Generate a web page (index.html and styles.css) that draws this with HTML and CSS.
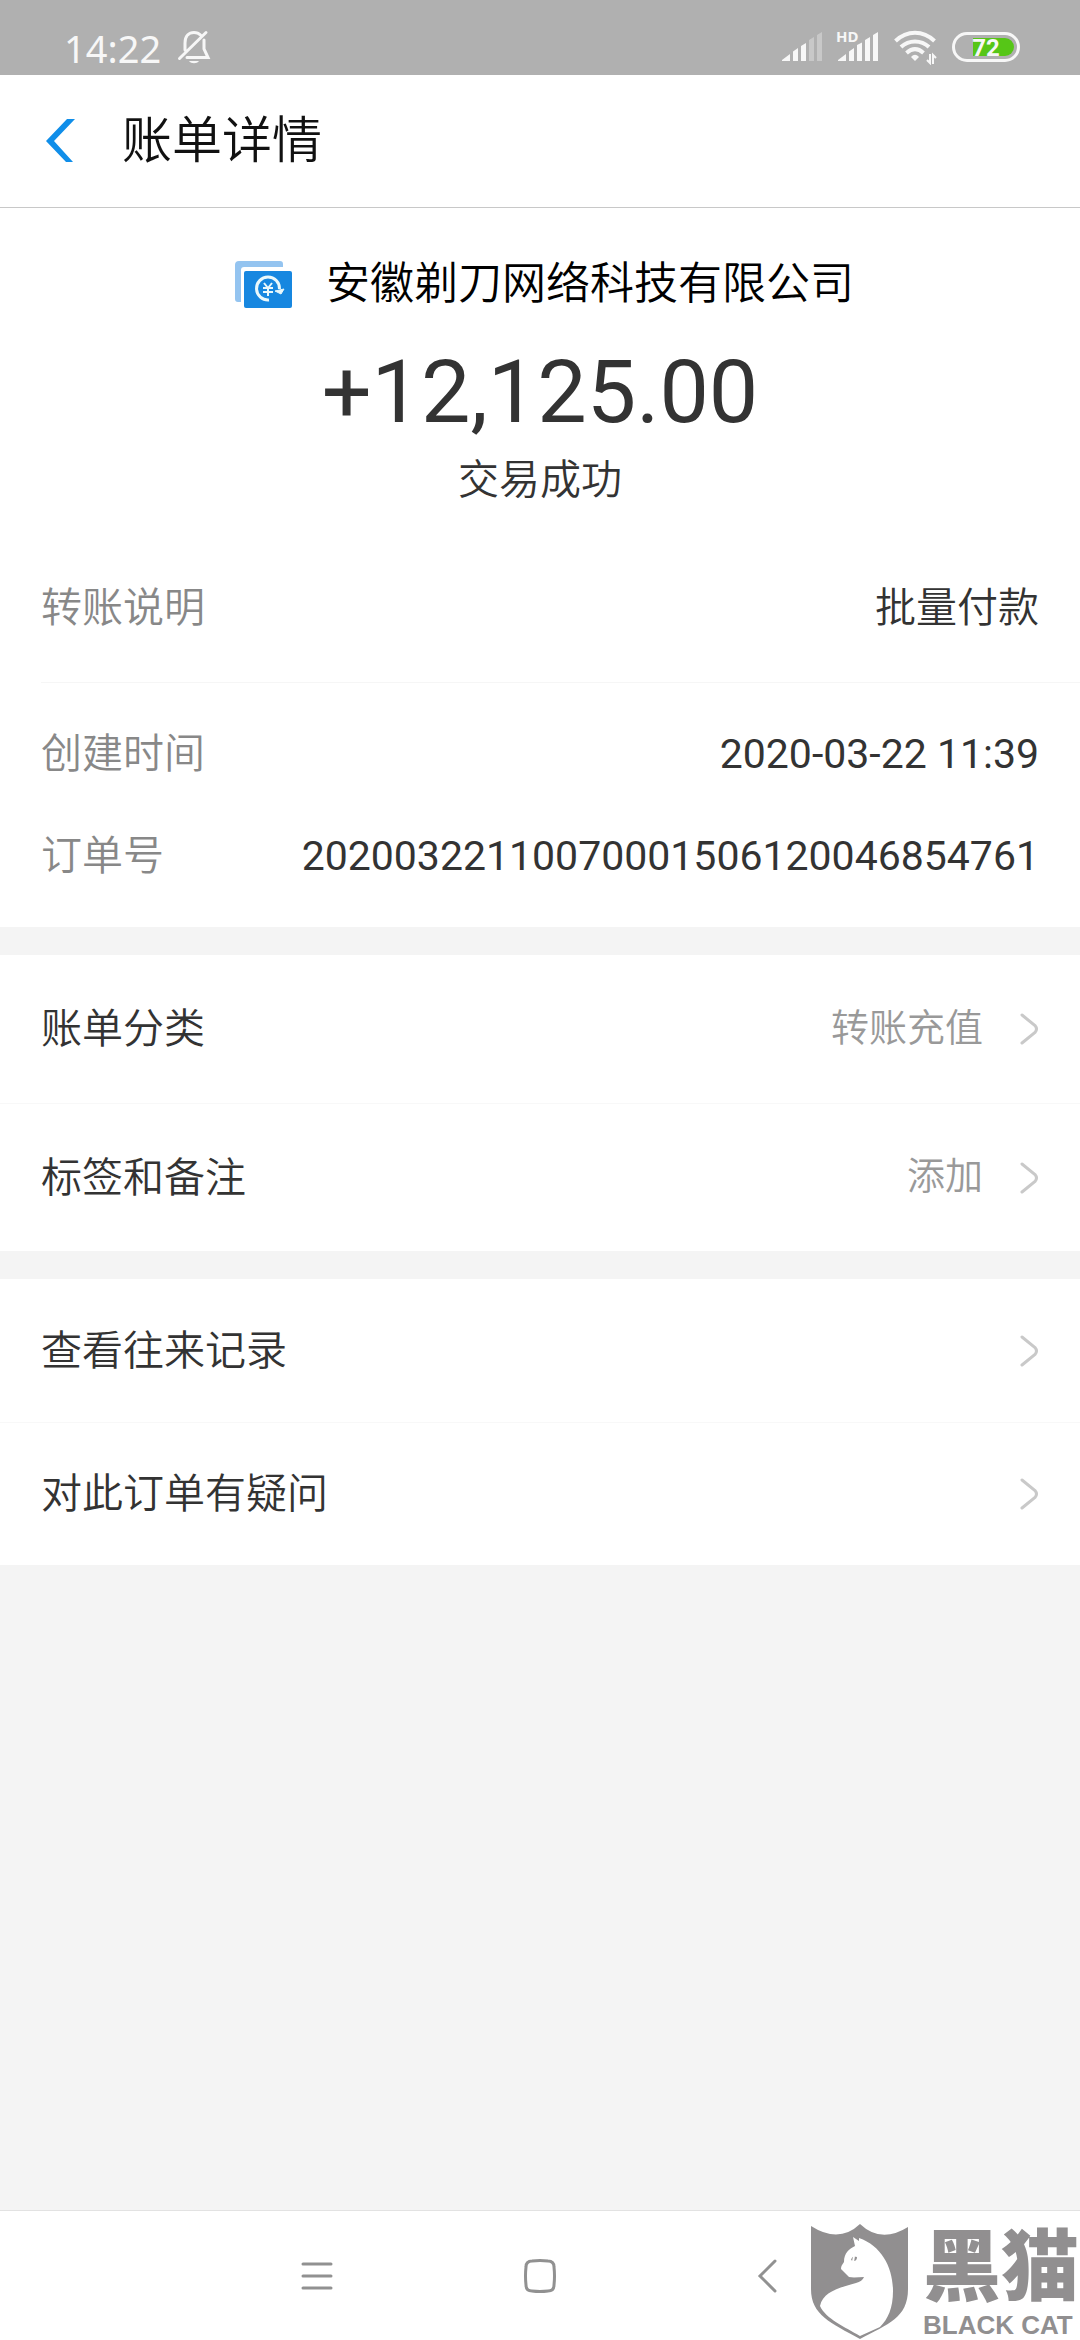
FILE: index.html
```html
<!DOCTYPE html>
<html lang="zh-CN">
<head>
<meta charset="utf-8">
<meta name="viewport" content="width=device-width, initial-scale=1">
<title>账单详情</title>
<link rel="stylesheet" href="styles.css">
</head>
<body>
<div class="screen">
  <div class="status">
    <span class="clock">14:22</span>
    <svg class="bell" width="34" height="34" viewBox="0 0 34 34" fill="none" stroke="#f7f7f7" stroke-width="3" stroke-linecap="round">
      <path d="M8 20V13C8 6 12 2.500 17 2.500C19.500 2.500 22 3.500 23.500 5M27 10V19L31 27.500H10M2.500 28.500L29 2.500"/>
      <path d="M12 31H22C20 34 14 34 12 31Z" fill="#f7f7f7" stroke="none"/>
    </svg>
    <span class="grow"></span>
    <svg class="signals" width="98" height="42" viewBox="0 -8 98 42" fill="#f7f7f7">
      <path d="M0 29V28L8 22V29ZM11 29V19.500L16 16V29ZM19 29V14L24 11V29Z"/>
      <path d="M27 29V8L32 5V29ZM35 29V3L40 0V29Z" opacity=".35"/>
      <path d="M56 29V28L64 22V29ZM67 29V19.500L72 16V29ZM75 29V13L80 10.500V29ZM83 29V8L88 5V29ZM91 29V3L96 0V29Z"/>
      <text class="hd" x="54" y="10">HD</text>
    </svg>
    <svg class="wifi" width="44" height="36" viewBox="0 0 44 36" fill="none" stroke="#f7f7f7" stroke-width="4">
      <path d="M1.500 12C13 1 29 1 40.500 12M7 18C15 10.500 27 10.500 35 18M12.500 24C18 19 24 19 29.500 24"/>
      <path d="M17 28C20 25 22 25 25 28L21 32Z" fill="#f7f7f7" stroke="none"/>
      <path d="M36 25V34L33 31M39 35V26L42 29" stroke-width="2"/>
    </svg>
    <svg class="battery" width="68" height="30" viewBox="0 0 68 30">
      <rect x="1.500" y="1.500" width="65" height="27" rx="13.500" fill="none" stroke="#f7f7f7" stroke-width="3"/>
      <path d="M21 6H53A9 9 0 0 1 53 24H21Z" fill="#56c617"/>
      <text class="level" x="34" y="24" text-anchor="middle">72</text>
    </svg>
  </div>

  <header class="bar">
    <button class="back" type="button" aria-label="返回">
      <svg width="30" height="44" viewBox="0 0 30 44" fill="#108ee9"><path d="M21 0H29L8 22L27 43H20L0 22Z"/></svg>
    </button>
    <h1 class="title">账单详情</h1>
  </header>

  <main>
    <section class="panel">
      <div class="hero">
        <div class="payee">
          <svg width="68" height="48" viewBox="-8 -1 68 48">
            <path d="M5 0H46Q49 0 49 3V6H10Q7 6 7 9V41H4Q1 41 1 38V4Q1 0 5 0Z" fill="#94c4f0"/>
            <rect x="10" y="10" width="48" height="37" rx="2" fill="#1787e0"/>
            <path d="M35 39A11.500 11.500 0 1 1 45.500 28" fill="none" stroke="#eaf8fb" stroke-width="3"/>
            <path d="M41 30L50 28L47 33Z" fill="#eaf8fb" stroke="#eaf8fb"/>
            <path d="M30 22L34 27L38 22M29 27H39M29 31H39M34 27V35" fill="none" stroke="#eaf8fb" stroke-width="2"/>
          </svg>
          <span>安徽剃刀网络科技有限公司</span>
        </div>
        <div class="amount">+12,125.00</div>
        <div class="state">交易成功</div>
      </div>
      <dl class="facts">
        <div class="fact fact-lone"><dt>转账说明</dt><dd>批量付款</dd></div>
        <div class="fact-group">
          <div class="fact"><dt>创建时间</dt><dd class="digits">2020-03-22 11:39</dd></div>
          <div class="fact"><dt>订单号</dt><dd class="digits">20200322110070001506120046854761</dd></div>
        </div>
      </dl>
    </section>

    <nav class="panel links">
      <a class="link link-tall" href="#category"><span>账单分类</span><span class="value">转账充值</span><svg class="chevron" width="20" height="36" viewBox="0 0 20 36"><path d="M3 4L16 14.500Q19 18 16 21.500L3 32"/></svg></a>
      <a class="link link-tall" href="#note"><span>标签和备注</span><span class="value">添加</span><svg class="chevron" width="20" height="36" viewBox="0 0 20 36"><path d="M3 4L16 14.500Q19 18 16 21.500L3 32"/></svg></a>
    </nav>

    <nav class="panel links">
      <a class="link" href="#history"><span>查看往来记录</span><svg class="chevron" width="20" height="36" viewBox="0 0 20 36"><path d="M3 4L16 14.500Q19 18 16 21.500L3 32"/></svg></a>
      <a class="link" href="#help"><span>对此订单有疑问</span><svg class="chevron" width="20" height="36" viewBox="0 0 20 36"><path d="M3 4L16 14.500Q19 18 16 21.500L3 32"/></svg></a>
    </nav>
  </main>

  <footer class="keys">
    <button class="key" type="button" aria-label="最近任务"><svg width="32" height="32" viewBox="0 0 32 32"><path d="M2 4H30M2 16H30M2 28H30"/></svg></button>
    <button class="key" type="button" aria-label="主屏幕"><svg width="32" height="34" viewBox="0 0 32 34"><path d="M8 2Q16 1 24 2Q30 2 30 8Q31 17 30 26Q30 32 24 32Q16 33 8 32Q2 32 2 26Q1 17 2 8Q2 2 8 2Z"/></svg></button>
    <button class="key" type="button" aria-label="后退"><svg width="32" height="34" viewBox="0 0 32 34"><path d="M28 2L13 17L28 32"/></svg></button>
    <div class="mark">
      <svg width="98" height="116" viewBox="0 0 98 116">
        <path d="M0 2Q28 20 49 0Q70 20 97 3V65C97 94 77 100 49 115C20 99 0 91 0 65Z" fill="#918f90"/>
        <path d="M42 13L48 17V14C71 22 82 44 82 67C82 84 77 95 69 103L49 112C34 103 15 95 9 82C12 68 27 64 45 59C49 58 52 56 53 53C48 53 43 54 38 53L30 45C30 42 31 41 33 38C33 29 38 25 44 22Z" fill="#fff"/>
        <path d="M40 36C41 32 43 32 46 33C46 37 43 38 40 36Z" fill="#918f90"/>
        <path d="M43 32L42 38" stroke="#fff" stroke-width="2"/>
      </svg>
      <div class="mark-words"><span class="mark-cn">黑猫</span><span class="mark-en">BLACK CAT</span></div>
    </div>
  </footer>
</div>
</body>
</html>
```

FILE: styles.css
```css
* { box-sizing: border-box; }

body {
  margin: 0;
  background: #f4f4f4;
  color: #333;
  font-family: Roboto, "Noto Sans CJK SC", sans-serif;
  font-size: 41px;
  font-weight: 350;
  line-height: 60px;
}

button {
  padding: 0;
  border: 0;
  background: none;
}

svg { display: block; flex: none; }

.screen {
  display: flex;
  flex-direction: column;
  min-height: 100vh;
}

.status {
  display: flex;
  align-items: flex-start;
  height: 75px;
  padding: 24px 60px 0 64px;
  background: #b0b0b0;
  color: #f7f7f7;
}

.clock {
  font-family: "Noto Sans", sans-serif;
  font-size: 38px;
  font-weight: 400;
  line-height: 48px;
}

.bell { margin: 6px 0 0 16px; }
.grow { flex: 1; }
.wifi { margin: 5px 0 0 14px; }
.battery { margin: 8px 0 0 14px; }
.hd { font: 700 15px "Noto Sans", sans-serif; }
.level { font: 700 24px Roboto, sans-serif; fill: #f7f7f7; }

.bar {
  display: flex;
  align-items: center;
  gap: 46px;
  height: 133px;
  padding: 0 46px;
  border-bottom: 1px solid #c8c8c8;
  background: #fff;
}

.title {
  margin: 0;
  color: #111;
  font-size: 50px;
  font-weight: 350;
}

main { flex: 1; }

.panel { background: #fff; }
.panel + .panel { margin-top: 28px; }

.hero {
  display: flex;
  flex-direction: column;
  align-items: center;
  padding-top: 46px;
}

.payee {
  display: flex;
  align-items: center;
  gap: 32px;
  color: #000;
  font-size: 44px;
}

.amount {
  padding-top: 26px;
  font-size: 88px;
  font-weight: 400;
  line-height: 104px;
}

.state { padding-top: 6px; }

.facts { margin: 0; }

.fact {
  display: flex;
  justify-content: space-between;
  padding: 0 41px;
}

.fact dt { color: #888; }
.fact dd { margin: 0; }
.fact .digits { font-weight: 400; }
.fact-lone { padding-top: 68px; padding-bottom: 44px; }

.fact-group {
  display: flex;
  flex-direction: column;
  gap: 42px;
  margin-left: 41px;
  padding: 41px 0;
  border-top: 1px solid #f6f6f6;
}

.fact-group .fact { padding-left: 0; }

.link {
  display: flex;
  align-items: center;
  min-height: 143px;
  padding: 0 41px;
  color: #333;
  text-decoration: none;
}

.link + .link { border-top: 1px solid #f8f8f8; }
.link-tall { min-height: 148px; }

.value {
  margin-left: auto;
  padding-bottom: 3px;
  color: #999;
  font-size: 38px;
}

.chevron {
  margin-left: auto;
  fill: none;
  stroke: #c9c9c9;
  stroke-width: 3;
  stroke-linecap: round;
}

.value + .chevron { margin-left: 36px; }

.keys {
  position: relative;
  display: flex;
  align-items: center;
  justify-content: center;
  gap: 191px;
  height: 130px;
  border-top: 1px solid #e2e2e2;
  background: #fff;
}

.key svg {
  fill: none;
  stroke: #919191;
  stroke-width: 3;
  stroke-linecap: round;
}

.mark {
  position: absolute;
  right: 1px;
  bottom: 0;
  display: flex;
  align-items: flex-end;
  gap: 14px;
  color: #918f90;
}

.mark-words { display: flex; flex-direction: column; }

.mark-cn {
  font-size: 78px;
  font-weight: 900;
  line-height: 82px;
}

.mark-en {
  font: 700 26px/30px "Liberation Sans", sans-serif;
}
```
